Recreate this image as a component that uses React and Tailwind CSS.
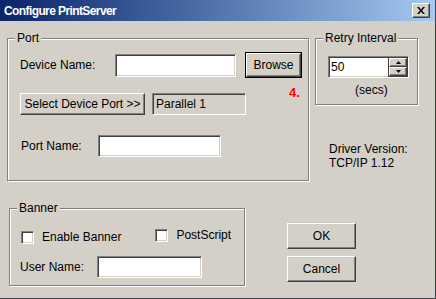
import React from 'react';

const sunken =
  'border border-t-[#808080] border-l-[#808080] border-r-white border-b-white shadow-[inset_1px_1px_0_#404040,inset_-1px_-1px_0_#d4d0c8]';
const raised =
  'bg-[#d4d0c8] border border-t-white border-l-white border-r-[#404040] border-b-[#404040] shadow-[inset_-1px_-1px_0_#808080]';
const groupBox =
  'relative border border-[#808080] shadow-[1px_1px_0_#fff,inset_1px_1px_0_#fff]';

const GroupLabel = ({ children }) => (
  <span className="absolute -top-[9px] left-[7px] bg-[#d4d0c8] px-[2px] leading-[16px]">{children}</span>
);

const TextBox = ({ className = '', value = '' }) => (
  <div className={`bg-white ${sunken} flex items-center px-[3px] ${className}`}>{value}</div>
);

const Button = ({ className = '', children }) => (
  <div className={`${raised} flex items-center justify-center ${className}`}>{children}</div>
);

const CheckBox = () => <div className={`w-[13px] h-[13px] bg-white ${sunken}`} />;

const App = () => {
  return (
    <div
      className="w-[436px] h-[299px] bg-[#d4d0c8] text-[12px] text-black border-r border-b border-[#404040] flex flex-col overflow-hidden"
      style={{ fontFamily: '"Liberation Sans", Arial, sans-serif' }}
    >
      {/* title bar */}
      <div className="h-[21px] shrink-0 bg-gradient-to-r from-[#0a246a] to-[#a6caf0] flex items-center pl-[4px] pr-[5px]">
        <span className="text-white font-bold text-[12px] tracking-[-0.6px]">Configure PrintServer</span>
        <div className={`ml-auto w-[18px] h-[15px] ${raised} flex items-center justify-center`}>
          <svg width="8" height="7" viewBox="0 0 8 7">
            <path d="M0 0h2l2 2.5L6 0h2L5 3.5 8 7H6L4 4.5 2 7H0l3-3.5z" fill="#000" />
          </svg>
        </div>
      </div>

      {/* top row */}
      <div className="flex pl-[7px] pt-[17px]">
        <div className={`${groupBox} w-[302px] h-[143px] shrink-0`}>
          <GroupLabel>Port</GroupLabel>
          <div className="flex items-center mt-[13px] pl-[12px]">
            <span className="w-[95px]">Device Name:</span>
            <TextBox className="w-[121px] h-[23px]" />
            <div className="ml-[9px] border border-black">
              <Button className="w-[55px] h-[24px]">Browse</Button>
            </div>
          </div>
          <span className="absolute left-[281px] top-[47px] text-[#ff0000] font-bold text-[13px] leading-[14px]">4.</span>
          <div className="flex items-center mt-[15px] pl-[12px]">
            <Button className="w-[125px] h-[22px]">Select Device Port &gt;&gt;</Button>
            <div className={`ml-[7px] w-[94px] h-[22px] ${sunken} flex items-center px-[3px]`}>Parallel 1</div>
          </div>
          <div className="flex items-center mt-[20px] pl-[13px]">
            <span className="w-[77px]">Port Name:</span>
            <TextBox className="w-[123px] h-[22px]" />
          </div>
        </div>

        <div className="ml-[6px] flex flex-col">
          <div className={`${groupBox} w-[103px] h-[67px]`}>
            <GroupLabel>Retry Interval</GroupLabel>
            <div className={`mt-[17px] ml-[12px] w-[81px] h-[22px] bg-white ${sunken} flex`}>
              <div className="flex-1 flex items-center pl-[2px]">50</div>
              <div className="w-[20px] flex flex-col border border-[#404040]">
                <div className={`${raised} flex-1 flex items-center justify-center`}>
                  <svg width="5" height="3" viewBox="0 0 5 3"><path d="M2.5 0L5 3H0z" fill="#000" /></svg>
                </div>
                <div className={`${raised} flex-1 flex items-center justify-center`}>
                  <svg width="5" height="3" viewBox="0 0 5 3"><path d="M0 0h5L2.5 3z" fill="#000" /></svg>
                </div>
              </div>
            </div>
            <div className="ml-[39px] mt-[5px] leading-[14px]">(secs)</div>
          </div>
          <div className="mt-[37px] ml-[14px] leading-[14px]">
            <div>Driver Version:</div>
            <div>TCP/IP 1.12</div>
          </div>
        </div>
      </div>

      {/* bottom row */}
      <div className="flex pl-[9px] mt-[27px]">
        <div className={`${groupBox} w-[236px] h-[78px] shrink-0`}>
          <GroupLabel>Banner</GroupLabel>
          <div className="flex items-center mt-[19px] pl-[11px]">
            <CheckBox />
            <span className="ml-[8px]">Enable Banner</span>
            <div className="ml-[34px] -mt-[4px] flex items-center">
              <CheckBox />
              <span className="ml-[8px]">PostScript</span>
            </div>
          </div>
          <div className="flex items-center mt-[10px] pl-[10px]">
            <span className="w-[77px]">User Name:</span>
            <TextBox className="w-[105px] h-[22px]" />
          </div>
        </div>

        <div className="ml-[42px] mt-[15px] flex flex-col gap-[7px]">
          <Button className="w-[69px] h-[26px]">OK</Button>
          <Button className="w-[69px] h-[26px]">Cancel</Button>
        </div>
      </div>
    </div>
  );
};

export default App;
